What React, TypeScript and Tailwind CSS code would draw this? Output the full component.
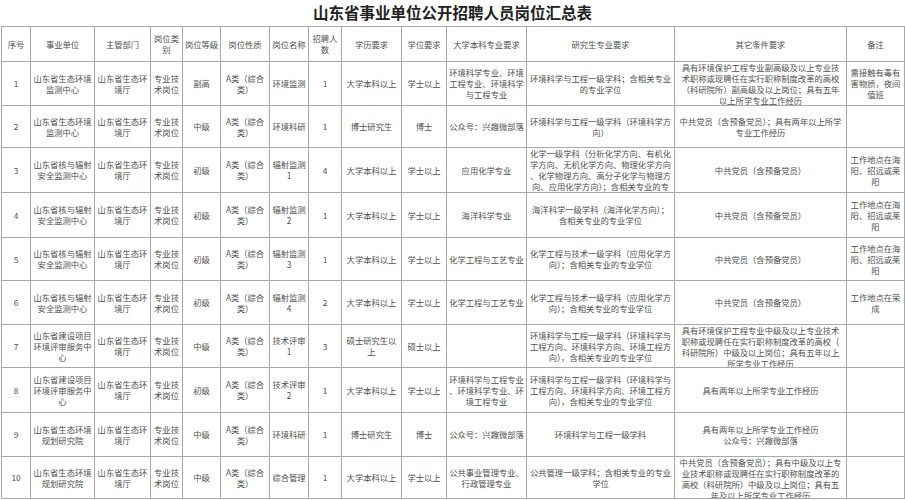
const font = { fontFamily: '"Noto Sans CJK SC", "Noto Sans", sans-serif' }

const colW = [
  'w-[29px]', 'w-[64px]', 'w-[56px]', 'w-[32px]', 'w-[38px]', 'w-[49px]', 'w-[39px]',
  'w-[33px]', 'w-[60px]', 'w-[45px]', 'w-[80px]', 'w-[148px]', 'w-[172px]', 'w-[58px]',
]

// the 其它条件要求 column sits a little tighter in the original
const colPad = colW.map((_, i) => (i === 12 ? 'px-[3px]' : 'px-[1px]'))

const headers = [
  '序号', '事业单位', '主管部门', '岗位类别', '岗位等级', '岗位性质', '岗位名称',
  '招聘人数', '学历要求', '学位要求', '大学本科专业要求', '研究生专业要求', '其它条件要求', '备注',
]

const A = 'A类（综合类）'
const DEPT = '山东省生态环境厅'
const KIND = '专业技术岗位'
const JC = '山东省生态环境监测中心'
const HF = '山东省核与辐射安全监测中心'
const PS = '山东省建设项目环境评审服务中心'
const GH = '山东省生态环境规划研究院'
const DANG = '中共党员（含预备党员）'
const HAIYANG = '工作地点在海阳、招远或莱阳'
const HUAGONG = '化学工程与技术一级学科（应用化学方向）；含相关专业的专业学位'
const HJ = '环境科学与工程一级学科（环境科学与工程方向、环境科学方向、环境工程方向），含相关专业的专业学位'

const rows: { h: string; cells: string[] }[] = [
  {
    h: 'h-[43px]',
    cells: ['1', JC, DEPT, KIND, '副高', A, '环境监测', '1', '大学本科以上', '学士以上',
      '环境科学专业、环境工程专业、环境科学与工程专业',
      '环境科学与工程一级学科；含相关专业的专业学位',
      '具有环境保护工程专业副高级及以上专业技术职称或现聘任在实行职称制度改革的高校（科研院所）副高级及以上岗位；具有五年以上所学专业工作经历',
      '需接触有毒有害物质，夜间值班'],
  },
  {
    h: 'h-[41px]',
    cells: ['2', JC, DEPT, KIND, '中级', A, '环境科研', '1', '博士研究生', '博士',
      '公众号：兴趣微部落',
      '环境科学与工程一级学科（环境科学方向）',
      '中共党员（含预备党员）；具有两年以上所学专业工作经历', ''],
  },
  {
    h: 'h-[44px]',
    cells: ['3', HF, DEPT, KIND, '初级', A, '辐射监测1', '4', '大学本科以上', '学士以上',
      '应用化学专业',
      '化学一级学科（分析化学方向、有机化学方向、无机化学方向、物理化学方向、化学物理方向、高分子化学与物理方向、应用化学方向）；含相关专业的专业学位',
      DANG, HAIYANG],
  },
  {
    h: 'h-[44px]',
    cells: ['4', HF, DEPT, KIND, '初级', A, '辐射监测2', '1', '大学本科以上', '学士以上',
      '海洋科学专业',
      '海洋科学一级学科（海洋化学方向）；含相关专业的专业学位',
      DANG, HAIYANG],
  },
  {
    h: 'h-[42px]',
    cells: ['5', HF, DEPT, KIND, '初级', A, '辐射监测3', '1', '大学本科以上', '学士以上',
      '化学工程与工艺专业', HUAGONG, DANG, HAIYANG],
  },
  {
    h: 'h-[43px]',
    cells: ['6', HF, DEPT, KIND, '初级', A, '辐射监测4', '2', '大学本科以上', '学士以上',
      '化学工程与工艺专业', HUAGONG, DANG, '工作地点在荣成'],
  },
  {
    h: 'h-[42px]',
    cells: ['7', PS, DEPT, KIND, '中级', A, '技术评审1', '3', '硕士研究生以上', '硕士以上',
      '', HJ,
      '具有环境保护工程专业中级及以上专业技术职称或现聘任在实行职称制度改革的高校（科研院所）中级及以上岗位；具有五年以上所学专业工作经历',
      ''],
  },
  {
    h: 'h-[44px]',
    cells: ['8', PS, DEPT, KIND, '初级', A, '技术评审2', '1', '大学本科以上', '学士以上',
      '环境科学与工程专业、环境科学专业、环境工程专业', HJ,
      '具有两年以上所学专业工作经历', ''],
  },
  {
    h: 'h-[43px]',
    cells: ['9', GH, DEPT, KIND, '中级', A, '环境科研', '1', '博士研究生', '博士',
      '公众号：兴趣微部落', '环境科学与工程一级学科',
      '具有两年以上所学专业工作经历\n公众号：兴趣微部落', ''],
  },
  {
    h: 'h-[41px]',
    cells: ['10', GH, DEPT, KIND, '中级', A, '综合管理', '1', '大学本科以上', '学士以上',
      '公共事业管理专业、行政管理专业',
      '公共管理一级学科；含相关专业的专业学位',
      '中共党员（含预备党员）；具有中级及以上专业技术职称或现聘任在实行职称制度改革的高校（科研院所）中级及以上岗位；具有五年及以上所学专业工作经历',
      ''],
  },
]

function Cell({ h, pad, text }: { h: string; pad: string; text: string }) {
  return (
    <td className="border border-[#a9a9a9] p-0 align-middle">
      <div className={`${h} ${pad} flex flex-col overflow-hidden`}>
        <div className="my-auto whitespace-pre-line text-center [line-break:anywhere]">{text}</div>
      </div>
    </td>
  )
}

export default function App() {
  return (
    <div className="w-[905px] h-[500px] overflow-hidden bg-white text-[#505050]" style={font}>
      {/* Title */}
      <div className="h-[26px] flex items-center justify-center text-[15.5px] font-bold text-[#222]">
        山东省事业单位公开招聘人员岗位汇总表
      </div>

      <div className="pl-[1px]">
        <table className="table-fixed border-collapse w-[903px] text-[8.3px] leading-[11px]">
          <colgroup>
            {colW.map((w, i) => (
              <col key={i} className={w} />
            ))}
          </colgroup>
          <thead>
            <tr>
              {headers.map((t, i) => (
                <Cell key={i} h="h-[34px]" pad={colPad[i]} text={t} />
              ))}
            </tr>
          </thead>
          <tbody>
            {rows.map((r, ri) => (
              <tr key={ri}>
                {r.cells.map((c, ci) => (
                  <Cell key={ci} h={r.h} pad={colPad[ci]} text={c} />
                ))}
              </tr>
            ))}
          </tbody>
        </table>
      </div>
    </div>
  )
}
